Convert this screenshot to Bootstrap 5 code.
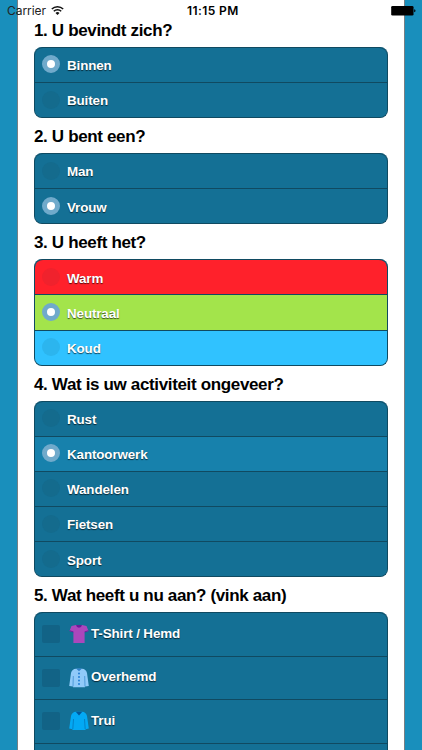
<!DOCTYPE html>
<html lang="nl">
<head>
<meta charset="utf-8">
<meta name="viewport" content="width=device-width, initial-scale=1">
<title>Vragenlijst</title>
<link href="https://cdn.jsdelivr.net/npm/bootstrap@5.3.0/dist/css/bootstrap.min.css" rel="stylesheet">
<style>
body { background: #198fbc; font-family: "Liberation Sans", Arial, sans-serif; height: 750px; }
.status { height: 22px; z-index: 5; font-family: Inter, sans-serif; color: #000; padding: 0 7px; }
.carrier { font-size: 12px; letter-spacing: -.05px; color: #222; line-height: 22px; }
.clock { left: 187px; font-size: 12px; font-weight: 600; letter-spacing: .4px; line-height: 22px; white-space: nowrap; }
.batt { left: 391px; top: 6px; }
.sheet { margin: 0 17px; height: 750px; background: #fff; border: solid #777f84; border-width: 0 1px; padding: 12px 16px 0; }
.question { height: 34.8px; font-size: 17px; font-weight: 700; letter-spacing: -.35px; line-height: 37px; margin: 0; color: #000; white-space: nowrap; }
.options { --bs-list-group-border-radius: 8px; border: 1px solid #104a61; border-top: 0; border-radius: 8px; overflow: hidden; background: #147095; flex-shrink: 0; }
.options .list-group-item { height: 35.2px; padding: 0 0 0 7px; border: 0; border-top: 1px solid #104a61; background: #147095; color: #fff; font-size: 13.4px; font-weight: 700; letter-spacing: -.12px; line-height: 1; text-shadow: 0 1px 1px rgba(0,0,0,.65); border-radius: 0; }
.options .list-group-item:first-child { border-radius: 8px 8px 0 0; }
.options .warm { background: #ff212b; }
.options .neutral { background: #a3e44b; }
.options .cold { background: #30c2ff; }
.options .picked { background: #1781ac; }
.options.clothes .list-group-item { height: 43.5px; }
.dot { width: 18px; height: 18px; border-radius: 50%; background: rgba(20,90,120,.25); margin: -1px 7px 0 0; flex: none; }
.warm .dot { background: #f0222d; }
.cold .dot { background: #2cb5ee; }
.dot.on { background: #fff; border: 5px solid #70aacb; }
.caption { padding-top: 2px; }
.tick { width: 18px; height: 18px; border-radius: 2px; background: #126386; margin-right: 9px; flex: none; }
.garment { width: 20px; height: 20px; margin-right: 2px; flex: none; }
.clothes .caption { padding: 0 0 2px; }
</style>
</head>
<body class="overflow-hidden position-relative">
<div class="status position-absolute top-0 start-0 w-100 d-flex">
  <span class="carrier">Carrier</span>
  <svg class="position-absolute" style="left:51px;top:5px" width="13" height="11" viewBox="0 0 13 11" fill="none" stroke="#111" stroke-width="1.5"><path d="M.8 4a8.1 8.1 0 0 1 11.400 0M2.800 6.300a5.200 5.200 0 0 1 7.400 0"/><path d="M4.500 8a2.900 2.900 0 0 1 4 0l-2 2z" fill="#111" stroke="none"/></svg>
  <span class="clock position-absolute">11:15 PM</span>
  <svg class="batt position-absolute" width="25" height="10" viewBox="0 0 25 10"><rect x=".2" width="22.300" height="9.500" rx="1.300"/><path d="M23.200 3.300q1.300.2 1.300 1.500t-1.300 1.500z"/></svg>
</div>
<main class="sheet overflow-hidden d-flex flex-column">
  <h2 class="question">1. U bevindt zich?</h2>
  <div class="options list-group">
    <div class="list-group-item d-flex align-items-center"><span class="dot on"></span><span class="caption">Binnen</span></div>
    <div class="list-group-item d-flex align-items-center"><span class="dot"></span><span class="caption">Buiten</span></div>
  </div>
  <h2 class="question">2. U bent een?</h2>
  <div class="options list-group">
    <div class="list-group-item d-flex align-items-center"><span class="dot"></span><span class="caption">Man</span></div>
    <div class="list-group-item d-flex align-items-center"><span class="dot on"></span><span class="caption">Vrouw</span></div>
  </div>
  <h2 class="question">3. U heeft het?</h2>
  <div class="options list-group">
    <div class="list-group-item warm d-flex align-items-center"><span class="dot"></span><span class="caption">Warm</span></div>
    <div class="list-group-item neutral d-flex align-items-center"><span class="dot on"></span><span class="caption">Neutraal</span></div>
    <div class="list-group-item cold d-flex align-items-center"><span class="dot"></span><span class="caption">Koud</span></div>
  </div>
  <h2 class="question">4. Wat is uw activiteit ongeveer?</h2>
  <div class="options list-group">
    <div class="list-group-item d-flex align-items-center"><span class="dot"></span><span class="caption">Rust</span></div>
    <div class="list-group-item picked d-flex align-items-center"><span class="dot on"></span><span class="caption">Kantoorwerk</span></div>
    <div class="list-group-item d-flex align-items-center"><span class="dot"></span><span class="caption">Wandelen</span></div>
    <div class="list-group-item d-flex align-items-center"><span class="dot"></span><span class="caption">Fietsen</span></div>
    <div class="list-group-item d-flex align-items-center"><span class="dot"></span><span class="caption">Sport</span></div>
  </div>
  <h2 class="question">5. Wat heeft u nu aan? (vink aan)</h2>
  <div class="options clothes list-group">
    <div class="list-group-item d-flex align-items-center"><span class="tick"></span>
      <svg class="garment" viewBox="0 0 20 20"><path fill="#ab47bc" d="M7 1h6l4.500 1L19.500 7l-3.900 1.300V19H4.400V8.300L.5 7l2-5z"/><path fill="#6a1b9a" d="M7 1h6q-.5 2.700-3 2.700T7 1zM.8 6.300l3.600 1.200v.9L.5 7.100zM19.200 6.300l-3.600 1.200v.9l3.900-1.300z"/></svg>
      <span class="caption">T-Shirt / Hemd</span></div>
    <div class="list-group-item d-flex align-items-center"><span class="tick"></span>
      <svg class="garment" viewBox="0 0 20 20"><path fill="#90caf9" d="M7 .8h6q4 .2 5 4.200L19.800 18l-3.800.5v.8H4v-.8L.2 18 2 5Q3 1 7 .8z"/><path stroke="#3f8fd0" stroke-width=".8" fill="none" d="M4.300 8L4 18.500M15.700 8l.3 10.500"/><path fill="#2f7fc9" d="M7 .6h6L10 3.200z"/><g fill="#1976d2"><circle cx="10" cy="5.500" r=".9"/><circle cx="10" cy="9" r=".9"/><circle cx="10" cy="12.500" r=".9"/><circle cx="10" cy="16" r=".9"/></g></svg>
      <span class="caption">Overhemd</span></div>
    <div class="list-group-item d-flex align-items-center"><span class="tick"></span>
      <svg class="garment" viewBox="0 0 20 20"><path fill="#03a9f4" d="M7 .8h6q4 .2 5 4.200L19.800 17.500l-3.300.7v.8h-13v-.8l-3.300-.7L2 5Q3 1 7 .8z"/><path stroke="#0277bd" stroke-width=".8" fill="none" d="M4.500 8L3.800 18M15.500 8l.7 10"/><path fill="#01579b" d="M6.700.8h6.600L10 4.400z"/></svg>
      <span class="caption">Trui</span></div>
    <div class="list-group-item d-flex align-items-center"></div>
  </div>
</main>
<script src="https://cdn.jsdelivr.net/npm/bootstrap@5.3.0/dist/js/bootstrap.bundle.min.js"></script>
</body>
</html>
